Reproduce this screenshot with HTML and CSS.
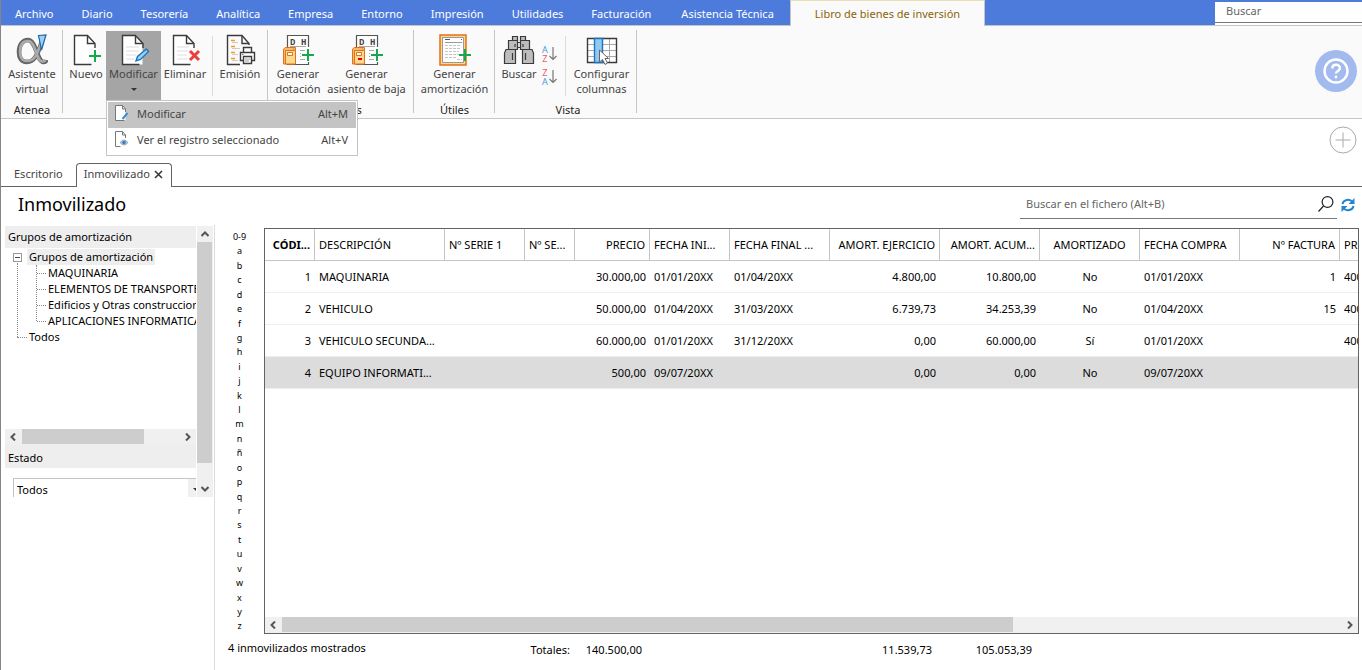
FILE: index.html
```html
<!DOCTYPE html>
<html lang="es">
<head>
<meta charset="utf-8">
<title>Inmovilizado</title>
<link rel="stylesheet" href="styles.css">
</head>
<body>
<svg class="defs" width="0" height="0" aria-hidden="true">
  <symbol id="page" viewBox="0 0 32 32">
    <path d="M4.500 1.500h14l6 8v21h-20z" fill="#fff"/>
    <path d="M25 14v-4.500L17.500 1.500h-13v29h17" fill="none" stroke="#3a3a3a" stroke-width="1.400"/>
    <path d="M17.500 2v7.500h7" fill="none" stroke="#3a3a3a" stroke-width="1.400"/>
  </symbol>
  <symbol id="plus" viewBox="0 0 12 12"><path d="M6 0v12M0 6h12" stroke="#16a84c" stroke-width="2"/></symbol>
  <symbol id="ledger" viewBox="0 0 32 32">
    <path d="M5.500 1.500h21v29h-21z" fill="#fff"/>
    <path d="M5.500 13V1.500h21V13M5.500 28v2.500h21V28" fill="none" stroke="#555" stroke-width="1.200"/>
    <path d="M8 12.500h16" stroke="#aaa"/>
    <path d="M18 16.500h5M18 25.500h5" stroke="#aaa"/><path d="M18 19.500h1M18 22.500h1" stroke="#aaa"/>
    <path d="M8.500 4v6.500M8 4.500h2.500l1.500 1.500v3l-1.500 1.500H8" fill="none" stroke="none"/>
    <path d="M1.500 15l2-1.500H12V30H1.500z" fill="#f9b96a" stroke="#e2711d"/>
    <path d="M3.500 16.500h10V30h-10z" fill="#fbd98f" stroke="#e2711d"/>
    <path d="M12 13.500h1.500v3" fill="none" stroke="#e2711d"/>
    <path d="M5.500 18.500h5v3h-5z" fill="#fff" stroke="#e2711d"/>
    <use href="#plus" x="20" y="15" width="12" height="12"/>
  </symbol>
  <symbol id="arrow-down" viewBox="0 0 8 16"><path d="M4 1v12M.5 10L4 13.500 7.500 10" fill="none" stroke="#777" stroke-width="1.200"/></symbol>
</svg>
<div class="app">
  <nav class="menubar">
    <a href="#" class="menu-item">Archivo</a>
    <a href="#" class="menu-item">Diario</a>
    <a href="#" class="menu-item">Tesorería</a>
    <a href="#" class="menu-item">Analítica</a>
    <a href="#" class="menu-item">Empresa</a>
    <a href="#" class="menu-item">Entorno</a>
    <a href="#" class="menu-item">Impresión</a>
    <a href="#" class="menu-item">Utilidades</a>
    <a href="#" class="menu-item">Facturación</a>
    <a href="#" class="menu-item menu-wide">Asistencia Técnica</a>
    <a href="#" class="menu-item menu-active">Libro de bienes de inversión</a>
    <div class="top-search"><input type="text" placeholder="Buscar" aria-label="Buscar"></div>
  </nav>

  <header class="ribbon">
    <section class="group">
      <div class="tools">
        <button class="tool tool-m">
          <svg class="icon" viewBox="0 0 32 32">
            <path d="M26 8C22 17 20 28 11 28 5 28 3 23.500 3 18 3 11 6.500 6 12 6c8 0 9 21 15 22 2 .2 3-.6 3.300-2" fill="none" stroke="#666" stroke-width="4.600"/>
            <path d="M25 9C22 17 20 27 11 27 6 27 4 23 4 18 4 11 7 7 12 7c8 0 8 20 14 20.500 2 .2 3-.6 3.300-1.500" fill="none" stroke="#aaa" stroke-width="2.600"/>
            <path d="M22.500 1.500l7.500-.5-4.500 15z" fill="#9ed0f5" stroke="#1c65a8" stroke-width="1.200"/>
          </svg>
          <span>Asistente<br>virtual</span>
        </button>
      </div>
      <h2 class="group-name">Atenea</h2>
    </section>

    <section class="group group-records">
      <div class="tools">
        <button class="tool tool-s">
          <svg class="icon" viewBox="0 0 32 32"><use href="#page" width="32" height="32"/><path d="M18 15h14v14H18z" fill="#fafafa"/><use href="#plus" x="19" y="16" width="12" height="12"/></svg>
          <span>Nuevo</span>
        </button>
        <div class="dropdown">
          <button class="tool tool-pressed" aria-expanded="true">
            <svg class="icon" viewBox="0 0 32 32"><use href="#page" width="32" height="32"/><path d="M8 13h13M8 17h13M8 21h10M8 25h8" stroke="#ddd"/><path d="M18 27l1.500-4.500 9-7.500 2 2.500-8 8z" fill="#9ed0f5" stroke="#1c75bb" stroke-width="1.400"/></svg>
            <span>Modificar</span>
            <i class="caret"></i>
          </button>
          <div class="popup" role="menu">
            <button class="popup-item popup-hover" role="menuitem">
              <svg class="mini" viewBox="0 0 16 16"><path d="M1.500.5h7l3 4v11h-10z" fill="#fff"/><path d="M11.500 7V4L8.500.5h-7v15h9" fill="none" stroke="#777"/><path d="M8.500.5V4h3" fill="none" stroke="#777"/><path d="M8.500 14l5-6" stroke="#3a8fd0" stroke-width="2"/></svg>
              <span>Modificar</span><kbd>Alt+M</kbd>
            </button>
            <button class="popup-item" role="menuitem">
              <svg class="mini" viewBox="0 0 16 16"><path d="M11.500 7V4L8.500.5h-7v15h5" fill="none" stroke="#777"/><path d="M8.500.5V4h3" fill="none" stroke="#777"/><path d="M6 11.500q4-5 8 0-4 5-8 0z" fill="#b5cde2" stroke="#9ab"/><circle cx="10" cy="11.500" r="1.800" fill="#3a7db8"/></svg>
              <span>Ver el registro seleccionado</span><kbd>Alt+V</kbd>
            </button>
          </div>
        </div>
        <button class="tool tool-s tool-delete">
          <svg class="icon" viewBox="0 0 32 32"><use href="#page" width="32" height="32"/><path d="M8 13h12M8 17h11M8 21h10M8 25h11" stroke="#ddd"/><path d="M19 15h12v14H20z" fill="#fafafa"/><path d="M21 17l9 9M30 17l-9 9" stroke="#ee3d3d" stroke-width="3"/></svg>
          <span>Eliminar</span>
        </button>
        <i class="divider"></i>
        <button class="tool tool-s tool-print">
          <svg class="icon" viewBox="0 0 32 32">
            <path d="M25 11V9.500L18 1.500H3.500v29H16" fill="none" stroke="#3a3a3a" stroke-width="1.400"/><path d="M18 2v7.500h7" fill="none" stroke="#3a3a3a" stroke-width="1.400"/>
            <path d="M7 6.500h4M7 12.500h4M7 18.500h4M7 24.500h4" stroke="#f0a020" stroke-width="1.500"/><path d="M8 8.500h6M8 14.500h8M8 20.500h6M8 26.500h6" stroke="#ccc"/>
            <path d="M19.500 19v-5.500h8V19" fill="#fff" stroke="#3a3a3a" stroke-width="1.400"/><path d="M16.500 18.500h14v8h-14z" fill="#fff" stroke="#3a3a3a" stroke-width="1.400"/><path d="M19.500 22.500h8v7h-8z" fill="#fff" stroke="#3a3a3a" stroke-width="1.400"/><path d="M21 25h5M21 27h4" stroke="#999"/><path d="M18 20.500h1.500" stroke="#2b8fd8"/>
          </svg>
          <span>Emisión</span>
        </button>
      </div>
    </section>

    <section class="group group-process">
      <div class="tools">
        <button class="tool tool-m tool-dot">
          <svg class="icon" viewBox="0 0 32 32"><use href="#ledger" width="32" height="32"/><text x="8" y="11" class="ledger-letter">D</text><text x="19" y="11" class="ledger-letter">H</text></svg>
          <span>Generar<br>dotación</span>
        </button>
        <button class="tool tool-l">
          <svg class="icon" viewBox="0 0 32 32"><use href="#ledger" width="32" height="32"/><text x="8" y="11" class="ledger-letter">D</text><text x="19" y="11" class="ledger-letter">H</text><path d="M7 25h4" stroke="#e00020" stroke-width="2"/></svg>
          <span>Generar<br>asiento de baja</span>
        </button>
      </div>
      <h2 class="group-name">Procesos</h2>
    </section>

    <section class="group">
      <div class="tools">
        <button class="tool tool-l">
          <svg class="icon" viewBox="0 0 32 32">
            <path d="M1 1h26v30H1z" fill="#fbd98f" stroke="#e2711d" stroke-width="1.500"/><path d="M3.500 3.500h21v25h-21z" fill="#fff" stroke="#999"/>
            <path d="M6 5.500h5M22 5.500h1" stroke="#555"/><path d="M6 8.500h17" stroke="#999"/><path d="M6 11.500h16M6 14.500h16M6 17.500h14M6 20.500h14M6 23.500h11M18 25.500h5" stroke="#c5c5c5" stroke-dasharray="3 1"/>
            <use href="#plus" x="20" y="15" width="12" height="12"/>
          </svg>
          <span>Generar<br>amortización</span>
        </button>
      </div>
      <h2 class="group-name">Útiles</h2>
    </section>

    <section class="group group-view">
      <div class="tools">
        <button class="tool tool-s">
          <svg class="icon" viewBox="0 0 32 32" fill="#bdbdbd" stroke="#3a3a3a" stroke-width="1.200">
            <path d="M9.500 2.500h5v4h-5zM17.500 2.500h5v4h-5z"/><path d="M14 8.500h4v5h-4z" fill="#eee"/><path d="M5.500 6.500h9v9h-9zM17.500 6.500h9v9h-9z"/><path d="M3 15.500h9.500v14H1.500V19zM19.500 15.500H29l1.500 3.500v10.500h-11z"/>
            <path d="M9.500 19v7M22.500 19v7M12 10v3M20 10v3" fill="none"/>
          </svg>
          <span>Buscar</span>
        </button>
        <div class="sorts">
          <button class="sort" aria-label="Orden ascendente"><span class="sort-letters"><b class="letter-a">A</b><b class="letter-z">Z</b></span><svg width="8" height="16"><use href="#arrow-down"/></svg></button>
          <button class="sort" aria-label="Orden descendente"><span class="sort-letters"><b class="letter-z">Z</b><b class="letter-a">A</b></span><svg width="8" height="16"><use href="#arrow-down"/></svg></button>
        </div>
        <i class="divider"></i>
        <button class="tool tool-config">
          <svg class="icon" viewBox="0 0 32 32">
            <path d="M1.500 4.500h29v24h-29z" fill="#fff"/><path d="M1.500 10.500h29M1.500 16.500h29M1.500 22.500h29M16.500 4.500v24M23.500 4.500v24" stroke="#aaa"/><path d="M1.500 4.500h29v24h-29z" fill="none" stroke="#3a3a3a" stroke-width="1.400"/>
            <path d="M8.500 4.500h8v24h-8z" fill="#92c9f0" stroke="#1c75bb" stroke-width="1.400"/><path d="M13.500 16v12l3-2.500 2.500 5 2.500-1.500-2.500-4.500h3.500z" fill="#fff" stroke="#666"/>
          </svg>
          <span>Configurar<br>columnas</span>
        </button>
      </div>
      <h2 class="group-name">Vista</h2>
    </section>

    <button class="help" aria-label="Ayuda">
      <svg viewBox="0 0 42 42"><circle cx="21" cy="21" r="21" fill="#a2baee"/><circle cx="21" cy="21" r="11.500" fill="none" stroke="#fff" stroke-width="2.400"/><path d="M17.300 18.500c0-5 7.600-5 7.600-.3 0 2.800-3.900 2.700-3.900 5.300" fill="none" stroke="#fff" stroke-width="2.400"/><circle cx="21" cy="27" r="1.400" fill="#fff"/></svg>
    </button>
  </header>

  <div class="quickbar">
    <button class="add" aria-label="Añadir"><svg viewBox="0 0 28 28" fill="none" stroke="#aaa"><circle cx="14" cy="14" r="13"/><path d="M14 6.500v15M6.500 14h15"/></svg></button>
  </div>

  <div class="tabs">
    <a href="#" class="tab">Escritorio</a>
    <div class="tab tab-active"><a href="#">Inmovilizado</a><button class="close" aria-label="Cerrar"><svg viewBox="0 0 9 9"><path d="M1 1l7 7M8 1L1 8" stroke="#333" stroke-width="1.500"/></svg></button></div>
  </div>

  <div class="titlebar">
    <h1>Inmovilizado</h1>
    <div class="file-search">
      <input type="text" placeholder="Buscar en el fichero (Alt+B)" aria-label="Buscar en el fichero">
      <button aria-label="Buscar"><svg width="16" height="16" viewBox="0 0 16 16" fill="none" stroke="#222" stroke-width="1.200"><circle cx="9.500" cy="6" r="5.400"/><path d="M5.500 10L.5 15.500"/></svg></button>
    </div>
    <button class="refresh" aria-label="Actualizar"><svg width="14" height="14" viewBox="0 0 14 14"><path d="M1.500 6a5.500 5 0 0 1 10-2M12.500 8a5.500 5 0 0 1-10 2" fill="none" stroke="#1f86cf" stroke-width="2"/><path d="M13.500 0v6h-6zM.5 14V8h6z" fill="#1f86cf"/></svg></button>
  </div>

  <div class="body">
    <aside class="sidebar">
      <div class="panel">
        <div class="panel-content">
          <h3 class="panel-head">Grupos de amortización</h3>
          <div class="tree-box">
            <ul class="tree">
              <li class="branch"><button class="minus" aria-label="Contraer"></button><span class="node selected">Grupos de amortización</span>
                <ul class="leaves">
                  <li>MAQUINARIA</li>
                  <li>ELEMENTOS DE TRANSPORTE</li>
                  <li>Edificios y Otras construcciones</li>
                  <li>APLICACIONES INFORMATICAS</li>
                </ul>
              </li>
              <li class="last"><span class="node">Todos</span></li>
            </ul>
          </div>
          <div class="hscroll">
            <button aria-label="Izquierda"><svg viewBox="0 0 8 8"><path d="M6 .5L2.500 4 6 7.500"/></svg></button>
            <div class="track"><div class="thumb thumb-tree"></div></div>
            <button aria-label="Derecha"><svg viewBox="0 0 8 8"><path d="M2 .5L5.500 4 2 7.500"/></svg></button>
          </div>
          <h3 class="panel-head panel-state"><label for="estado">Estado</label></h3>
          <div class="combo"><select id="estado"><option>Todos</option></select><i class="caret"></i></div>
        </div>
        <div class="vscroll">
          <button aria-label="Arriba"><svg viewBox="0 0 8 8"><path d="M.5 6L4 2.500 7.500 6"/></svg></button>
          <div class="thumb-v"></div>
          <button aria-label="Abajo"><svg viewBox="0 0 8 8"><path d="M.5 2L4 5.500 7.500 2"/></svg></button>
        </div>
      </div>
    </aside>

    <main class="content">
      <div class="browse">
        <nav class="letters">
          <a href="#">0-9</a><a href="#">a</a><a href="#">b</a><a href="#">c</a><a href="#">d</a><a href="#">e</a><a href="#">f</a><a href="#">g</a><a href="#">h</a><a href="#">i</a><a href="#">j</a><a href="#">k</a><a href="#">l</a><a href="#">m</a><a href="#">n</a><a href="#">ñ</a><a href="#">o</a><a href="#">p</a><a href="#">q</a><a href="#">r</a><a href="#">s</a><a href="#">t</a><a href="#">u</a><a href="#">v</a><a href="#">w</a><a href="#">x</a><a href="#">y</a><a href="#">z</a>
        </nav>
        <div class="grid">
          <div class="grid-view">
            <table>
              <colgroup><col class="w50"><col class="w130"><col class="w80"><col class="w50"><col class="w75"><col class="w80"><col class="w100"><col class="w110"><col class="w100"><col class="w100"><col class="w100"><col class="w100"><col class="w100"></colgroup>
              <thead><tr><th class="num key">CÓDI...</th><th>DESCRIPCIÓN</th><th>Nº SERIE 1</th><th>Nº SE...</th><th class="num">PRECIO</th><th>FECHA INI...</th><th>FECHA FINAL ...</th><th class="num">AMORT. EJERCICIO</th><th class="num">AMORT. ACUM...</th><th class="mid">AMORTIZADO</th><th>FECHA COMPRA</th><th class="num">Nº FACTURA</th><th>PROVEEDOR</th></tr></thead>
              <tbody>
                <tr><td class="num">1</td><td>MAQUINARIA</td><td></td><td></td><td class="num">30.000,00</td><td>01/01/20XX</td><td>01/04/20XX</td><td class="num">4.800,00</td><td class="num">10.800,00</td><td class="mid">No</td><td>01/01/20XX</td><td class="num">1</td><td>40000</td></tr>
                <tr><td class="num">2</td><td>VEHICULO</td><td></td><td></td><td class="num">50.000,00</td><td>01/04/20XX</td><td>31/03/20XX</td><td class="num">6.739,73</td><td class="num">34.253,39</td><td class="mid">No</td><td>01/04/20XX</td><td class="num">15</td><td>40000</td></tr>
                <tr><td class="num">3</td><td>VEHICULO SECUNDA...</td><td></td><td></td><td class="num">60.000,00</td><td>01/01/20XX</td><td>31/12/20XX</td><td class="num">0,00</td><td class="num">60.000,00</td><td class="mid">Sí</td><td>01/01/20XX</td><td class="num"></td><td>40000</td></tr>
                <tr class="current"><td class="num">4</td><td>EQUIPO INFORMATI...</td><td></td><td></td><td class="num">500,00</td><td>09/07/20XX</td><td></td><td class="num">0,00</td><td class="num">0,00</td><td class="mid">No</td><td>09/07/20XX</td><td class="num"></td><td></td></tr>
              </tbody>
            </table>
          </div>
          <div class="hscroll">
            <button aria-label="Izquierda"><svg viewBox="0 0 8 8"><path d="M6 .5L2.500 4 6 7.500"/></svg></button>
            <div class="track"><div class="thumb thumb-grid"></div></div>
            <button aria-label="Derecha"><svg viewBox="0 0 8 8"><path d="M2 .5L5.500 4 2 7.500"/></svg></button>
          </div>
        </div>
      </div>
      <footer class="totals">
        <span class="count">4 inmovilizados mostrados</span><span>Totales:</span><span>140.500,00</span><span>11.539,73</span><span>105.053,39</span>
      </footer>
    </main>
  </div>
</div>
</body>
</html>
```

FILE: styles.css
```css
* { box-sizing: border-box; }
body { margin: 0; font-family: "Noto Sans", "Open Sans", sans-serif; font-size: 11px; color: #000; background: #fff; }
button, input, select { font: inherit; color: inherit; border: 0; padding: 0; margin: 0; background: none; border-radius: 0; outline: 0; }
a { color: inherit; text-decoration: none; }
h1, h2, h3 { margin: 0; font-weight: 400; font-size: 11px; }
ul { list-style: none; margin: 0; padding: 0; }
.defs { position: absolute; }
.app { display: flex; flex-direction: column; min-height: 100vh; border-left: 1px solid #858585; overflow: hidden; }

/* Menu bar */
.menubar { display: flex; height: 26px; background: #4d7bdc; color: #fff; border-bottom: 1px solid #c5c5c5; white-space: nowrap; }
.menu-item { padding: 0 14px; line-height: 27px; }
.menu-wide { padding: 0 16px; }
.menu-active { padding: 0 24px; margin: 0 0 -1px; line-height: 26px; background: #fafafa; color: #8a6408; border: 1px solid #c5c5c5; border-bottom: 0; border-top: 1px solid #e9dfb4; }
.top-search { margin: 2px 0 0 auto; width: 147px; background: #fff; }
.top-search input { display: block; width: 100%; height: 21px; padding: 0 11px 3px; border-bottom: 1px solid #777; }
input::placeholder { color: #666; opacity: 1; }

/* Ribbon */
.ribbon { display: flex; height: 93px; background: #fafafa; border-bottom: 1px solid #c5c5c5; color: #444; }
.group { display: flex; flex-direction: column; position: relative; padding-top: 5px; }
.group::after { content: ""; position: absolute; right: 0; top: 4px; bottom: 5px; width: 1px; background: #c5c5c5; }
.group-records { padding-left: 3px; }
.group-process { padding-left: 2px; padding-right: 7px; }
.group-view { padding-left: 4px; }
.tools { display: flex; height: 69px; }
.tool { display: flex; flex-direction: column; align-items: center; padding-top: 3px; height: 69px; line-height: 15px; text-align: center; white-space: nowrap; }
.icon { display: block; width: 32px; height: 32px; flex: none; }
.tool-s { width: 40px; }
.tool-m { width: 62px; }
.tool-l { width: 81px; }
.tool-delete, .tool-print { width: 48px; }
.tool-dot { width: 56px; }
.tool-config { width: 71px; }
.dropdown { position: relative; }
.tool-pressed { width: 55px; background: #a5a5a5; }
.tool-print { margin: 0 4px 0 3px; }
.caret { border: 3px solid transparent; border-top-color: #333; border-bottom: 0; }
.tool .caret { margin-top: 7px; }
.divider { width: 1px; height: 60px; margin: 5px 0 0 3px; background: #dcdcdc; }
.group-name { color: #222; text-align: center; line-height: 14px; margin-top: 3px; }
.ledger-letter { font: 700 9px "Liberation Mono", monospace; fill: #444; }
.sorts { display: flex; flex-direction: column; width: 23px; padding: 13px 0 0 3px; gap: 3px; }
.sort { display: flex; align-items: center; height: 20px; gap: 1px; }
.sort-letters { display: flex; flex-direction: column; font-size: 9px; line-height: 9px; }
.sort-letters b { font-weight: 400; }
.letter-a { color: #4a9bd8; }
.letter-z { color: #e86060; }
.help { width: 42px; height: 42px; margin: 24px 5px 0 auto; }
.help svg, .add svg { display: block; width: 100%; height: 100%; }

.popup { position: absolute; left: 0; top: 69px; z-index: 2; width: 252px; padding: 1px; background: #fff; border: 1px solid #c5c5c5; }
.popup-item { display: flex; align-items: center; width: 100%; height: 26px; padding: 0 8px 4px 6px; color: #444; }
.popup-hover { background: #c4c4c4; }
.popup-item kbd { font: inherit; margin-left: auto; }
.mini { width: 16px; height: 16px; margin-right: 7px; }

/* Document tabs */
.quickbar { display: flex; justify-content: flex-end; padding: 7px 5px 0 0; height: 44px; }
.add { width: 28px; height: 28px; }
.tabs { display: flex; height: 24px; border-bottom: 1px solid #636363; color: #444; line-height: 22px; }
.tab { padding: 0 13px; }
.tab-active { display: flex; align-items: center; height: 24px; padding: 0 8px 3px 7px; border: 1px solid #636363; border-bottom: 0; border-radius: 4px 4px 0 0; background: #fff; }
.close { width: 9px; height: 9px; margin-left: 4px; }
.close svg { display: block; }

/* Title row */
.titlebar { display: flex; height: 38px; padding-right: 7px; }
.titlebar h1 { flex: 1; padding-left: 17px; font-size: 18px; line-height: 34px; }
.file-search { display: flex; align-items: center; width: 317px; height: 32px; padding: 2px 3px 0 6px; border-bottom: 1px solid #777; }
.file-search input { flex: 1; }
.file-search svg, .refresh svg { display: block; }
.refresh { margin-left: 4px; align-self: flex-start; padding-top: 11px; }

/* Body */
.body { display: flex; flex: 1; }
.sidebar { width: 214px; padding: 1px 1px 0 4px; border-right: 1px solid #dcdcdc; }
.panel { display: flex; height: 271px; }
.panel-content { flex: 1; min-width: 0; overflow: hidden; }
.panel-head { height: 22px; padding-left: 3px; line-height: 22px; background: #eee; }
.panel-state { height: 23px; line-height: 25px; }
.tree-box { height: 181px; overflow: hidden; padding: 1px 0 0 8px; white-space: nowrap; line-height: 16px; }
.tree li { position: relative; }
.node { display: inline-block; padding: 0 2px; margin-left: 14px; }
.minus + .node { margin-left: 5px; }
.selected { background: #eee; }
.minus { width: 9px; height: 9px; border: 1px solid #999; background: linear-gradient(#446, #446) center / 5px 1px no-repeat #fff; }
.branch::before { content: ""; position: absolute; left: 4px; top: 14px; bottom: -8px; border-left: 1px dotted #888; }
.last::before { content: ""; position: absolute; left: 4px; top: 8px; width: 10px; border-top: 1px dotted #888; }
.leaves { padding-left: 35px; position: relative; }
.leaves::before { content: ""; position: absolute; left: 23px; top: 0; bottom: 8px; border-left: 1px dotted #888; }
.leaves li::before { content: ""; position: absolute; left: -11px; top: 8px; width: 9px; border-top: 1px dotted #888; }
.hscroll { display: flex; height: 16px; background: #f0f0f0; }
.hscroll button, .vscroll button { display: flex; align-items: center; justify-content: center; width: 16px; height: 16px; flex: none; }
.hscroll svg, .vscroll svg { width: 8px; height: 8px; fill: none; stroke: #555; stroke-width: 2; }
.track { flex: 1; padding-left: 1px; }
.thumb { height: 15px; background: #cdcdcd; }
.thumb-tree { width: 77%; }
.thumb-grid { width: 69%; }
.vscroll { display: flex; flex-direction: column; width: 16px; background: #f0f0f0; margin-left: 1px; }
.vscroll button { width: 15px; }
.thumb-v { flex: 1; width: 15px; margin-bottom: 18px; background: #cdcdcd; }
.combo { display: flex; align-items: center; height: 22px; margin: 10px 0 0 8px; border: 1px solid #c5c5c5; border-right: 0; background: linear-gradient(#f0f0f0, #f0f0f0) right / 8px 100% no-repeat; }
.combo select { flex: 1; appearance: none; padding-left: 3px; }
.combo .caret { margin-right: -3px; }

.content { flex: 1; min-width: 0; display: flex; flex-direction: column; padding: 3px 3px 0 0; }
.browse { display: flex; flex: 1; }
.letters { display: flex; flex-direction: column; width: 49px; padding-top: 2px; text-align: center; font-size: 9px; }
.letters a { flex: 1; line-height: 14px; }
.grid { display: flex; flex-direction: column; flex: 1; min-width: 0; border: 1px solid #636363; }
.grid-view { flex: 1; overflow: hidden; }
table { table-layout: fixed; width: 1175px; border-collapse: separate; border-spacing: 0; }
th, td { height: 32px; padding: 0 4px; text-align: left; font-weight: 400; white-space: nowrap; overflow: hidden; }
th { border-right: 1px solid #c5c5c5; border-bottom: 1px solid #c5c5c5; }
td { border-bottom: 1px solid #eee; }
.num { text-align: right; }
.mid { text-align: center; }
.key { font-weight: 700; }
.current td { background: #dcdcdc; }
.w50 { width: 50px; }
.w75 { width: 75px; }
.w80 { width: 80px; }
.w100 { width: 100px; }
.w110 { width: 110px; }
.w130 { width: 130px; }
.totals { display: grid; grid-template-columns: 302px 40px 72px 290px 100px; padding-left: 13px; height: 36px; line-height: 32px; text-align: right; white-space: nowrap; }
.count { text-align: left; line-height: 28px; }
```
